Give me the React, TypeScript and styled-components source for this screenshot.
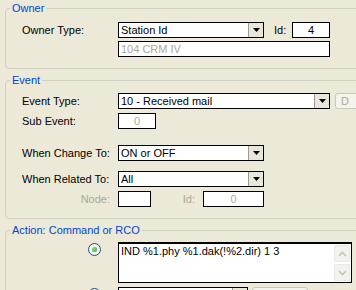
import styled, { createGlobalStyle } from "styled-components";

const GlobalStyle = createGlobalStyle`
  html, body {
    margin: 0;
    padding: 0;
    background: #ece9d8;
  }
  body {
    font-family: "Liberation Sans", Arial, sans-serif;
    font-size: 11px;
    color: #000;
  }
`;

const Page = styled.div`
  width: 356px;
  height: 290px;
  overflow: hidden;
  box-sizing: border-box;
  padding: 2px 0 0 5px;
  display: flex;
  flex-direction: column;
  gap: 5px;
`;

const Group = styled.fieldset<{ $top: number; $bottom: number }>`
  margin: 0;
  width: 380px;
  flex-shrink: 0;
  box-sizing: border-box;
  min-inline-size: 0;
  border: 1px solid #d0d0bf;
  border-radius: 4px;
  padding: ${(p) => p.$top}px 0 ${(p) => p.$bottom}px 4px;
`;

const Legend = styled.legend`
  padding: 0 2px;
  color: #0046d5;
  font-size: 11px;
  line-height: 12px;
`;

const Rows = styled.div`
  margin-left: 12px;
  display: flex;
  flex-direction: column;
`;

const Row = styled.div<{ $gap?: number; $h?: number }>`
  display: flex;
  align-items: center;
  height: ${(p) => p.$h ?? 16}px;
  margin-top: ${(p) => p.$gap ?? 0}px;
`;

const Label = styled.span<{ $w?: number; $pl?: number; $muted?: boolean; $right?: boolean }>`
  width: ${(p) => p.$w ?? 96}px;
  flex-shrink: 0;
  box-sizing: border-box;
  white-space: nowrap;
  color: ${(p) => (p.$muted ? "#aca899" : "#000")};
  text-align: ${(p) => (p.$right ? "right" : "left")};
  padding-left: ${(p) => p.$pl ?? 0}px;
  padding-right: ${(p) => (p.$right ? 8 : 0)}px;
`;

const SelectBox = styled.div<{ $w: number }>`
  width: ${(p) => p.$w}px;
  height: 16px;
  flex-shrink: 0;
  box-sizing: border-box;
  border: 1px solid #000;
  background: #fff;
  display: flex;
`;

const SelectText = styled.span`
  flex: 1;
  padding-left: 2px;
  line-height: 14px;
  white-space: nowrap;
  overflow: hidden;
`;

const DropButton = styled.span`
  width: 14px;
  border-left: 1px solid #9c9a8e;
  background: #e9e6da;
  display: flex;
  align-items: center;
  justify-content: center;
`;

const TextBox = styled.div<{ $w: number; $muted?: boolean; $center?: boolean }>`
  width: ${(p) => p.$w}px;
  height: 16px;
  flex-shrink: 0;
  box-sizing: border-box;
  border: 1px solid #000;
  background: #fff;
  padding: 0 2px;
  line-height: 14px;
  white-space: nowrap;
  overflow: hidden;
  color: ${(p) => (p.$muted ? "#aca899" : "#000")};
  text-align: ${(p) => (p.$center ? "center" : "left")};
`;

const Button = styled.div<{ $w: number; $ml: number }>`
  width: ${(p) => p.$w}px;
  height: 16px;
  margin-left: ${(p) => p.$ml}px;
  flex-shrink: 0;
  box-sizing: border-box;
  border: 1px solid #c9c7ba;
  border-radius: 3px;
  background: #f5f4ea;
  color: #aca899;
  line-height: 14px;
  padding-left: 5px;
`;

const RadioCell = styled.div`
  width: 96px;
  flex-shrink: 0;
  align-self: flex-start;
  display: flex;
  justify-content: flex-end;
  padding: 1px 17px 0 0;
  box-sizing: border-box;
`;

const Radio = styled.span<{ $on?: boolean }>`
  width: 13px;
  height: 13px;
  box-sizing: border-box;
  border-radius: 50%;
  border: 1px solid #1c5180;
  background: #f4f3ee;
  display: flex;
  align-items: center;
  justify-content: center;
  &::after {
    content: "";
    display: ${(p) => (p.$on ? "block" : "none")};
    width: 5px;
    height: 5px;
    border-radius: 50%;
    background: radial-gradient(circle at 40% 40%, #8ee08e, #21a121);
  }
`;

const TextArea = styled.div`
  width: 234px;
  height: 41px;
  flex-shrink: 0;
  align-self: flex-start;
  box-sizing: border-box;
  border: 1px solid #000;
  box-shadow: inset 0 1px 0 #000;
  background: #fff;
  display: flex;
`;

const AreaText = styled.span`
  flex: 1;
  padding: 2px 0 0 2px;
  line-height: 12px;
`;

const ScrollBar = styled.div`
  width: 16px;
  display: flex;
  flex-direction: column;
  justify-content: space-between;
  padding: 2px 1px 1px 0;
`;

const ScrollButton = styled.span`
  height: 17px;
  box-sizing: border-box;
  border: 1px solid #e9e8e1;
  border-radius: 2px;
  background: #f3f3ee;
  display: flex;
  align-items: center;
  justify-content: center;
`;

function Arrow() {
  return (
    <svg width="7" height="4" viewBox="0 0 7 4">
      <polygon points="0,0 7,0 3.5,4" fill="#000" />
    </svg>
  );
}

function Chevron({ up }: { up?: boolean }) {
  return (
    <svg width="9" height="6" viewBox="0 0 9 6">
      <polyline
        points={up ? "1,5 4.5,1.5 8,5" : "1,1 4.5,4.5 8,1"}
        fill="none"
        stroke="#c3c3b8"
        strokeWidth="1.6"
      />
    </svg>
  );
}

function Select({ w, value }: { w: number; value: string }) {
  return (
    <SelectBox $w={w}>
      <SelectText>{value}</SelectText>
      <DropButton>
        <Arrow />
      </DropButton>
    </SelectBox>
  );
}

export default function App() {
  return (
    <>
      <GlobalStyle />
      <Page>
        <Group $top={8} $bottom={11}>
          <Legend>Owner</Legend>
          <Rows>
            <Row>
              <Label>Owner Type:</Label>
              <Select w={146} value="Station Id" />
              <Label $w={28} $pl={10}>Id:</Label>
              <TextBox $w={38} $center>4</TextBox>
            </Row>
            <Row $gap={3}>
              <Label />
              <TextBox $w={212} $muted>104 CRM IV</TextBox>
            </Row>
          </Rows>
        </Group>

        <Group $top={7} $bottom={11}>
          <Legend>Event</Legend>
          <Rows>
            <Row>
              <Label>Event Type:</Label>
              <Select w={212} value="10 - Received mail" />
              <Button $w={30} $ml={5}>D</Button>
            </Row>
            <Row $gap={4}>
              <Label>Sub Event:</Label>
              <TextBox $w={38} $muted $center>0</TextBox>
            </Row>
            <Row $gap={16}>
              <Label>When Change To:</Label>
              <Select w={146} value="ON or OFF" />
            </Row>
            <Row $gap={10}>
              <Label>When Related To:</Label>
              <Select w={146} value="All" />
            </Row>
            <Row $gap={4}>
              <Label $muted $right>Node:</Label>
              <TextBox $w={33} />
              <Label $w={52} $muted $right>Id:</Label>
              <TextBox $w={61} $muted $center>0</TextBox>
            </Row>
          </Rows>
        </Group>

        <Group $top={6} $bottom={8}>
          <Legend>Action: Command or RCO</Legend>
          <Rows>
            <Row $h={41}>
              <RadioCell>
                <Radio $on />
              </RadioCell>
              <TextArea>
                <AreaText>IND %1.phy %1.dak(!%2.dir) 1 3</AreaText>
                <ScrollBar>
                  <ScrollButton>
                    <Chevron up />
                  </ScrollButton>
                  <ScrollButton>
                    <Chevron />
                  </ScrollButton>
                </ScrollBar>
              </TextArea>
            </Row>
            <Row $gap={4}>
              <RadioCell>
                <Radio />
              </RadioCell>
              <Select w={130} value="" />
              <Button $w={56} $ml={4} />
            </Row>
          </Rows>
        </Group>
      </Page>
    </>
  );
}
